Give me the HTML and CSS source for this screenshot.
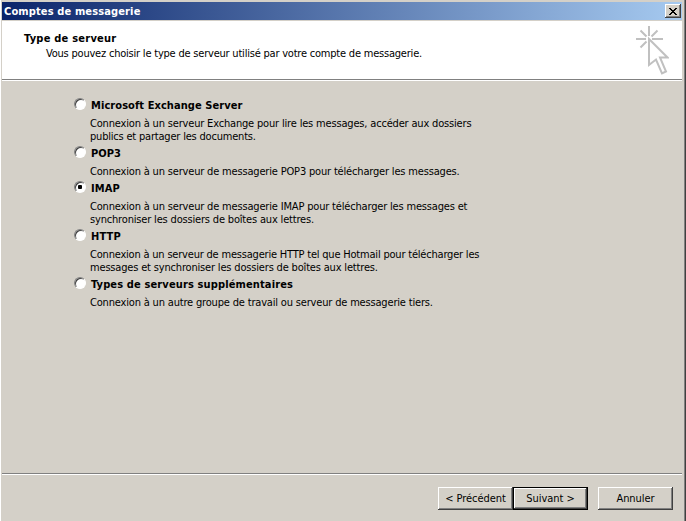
FILE: index.html
```html
<!DOCTYPE html>
<html lang="fr">
<head>
<meta charset="utf-8">
<title>Comptes de messagerie</title>
<link rel="stylesheet" href="styles.css">
</head>
<body>
<div class="window">
  <div class="titlebar">
    <span class="caption">Comptes de messagerie</span>
    <button class="close" aria-label="Fermer"><svg width="8" height="7" viewBox="0 0 8 7" shape-rendering="crispEdges"><path d="M0 0h2v1h1v1h2V1h1V0h2v1H7v1H6v1H5v1h1v1h1v1h1v1H6V6H5V5H3v1H2v1H0V6h1V5h1V4h1V3H2V2H1V1H0z"/></svg></button>
  </div>
  <header class="header">
    <div class="heading">
      <h1>Type de serveur</h1>
      <p class="intro">Vous pouvez choisir le type de serveur utilisé par votre compte de messagerie.</p>
    </div>
    <svg class="cursor" width="33" height="50" viewBox="0 0 33 50" fill="none" stroke="#c0c0c0" stroke-width="2">
      <path d="M13 0v10M0 13h10M16 13h11M4.500 4.500l6 6M21.500 4.500l-6 6M4.500 21.500l6-6"/>
      <path d="M13 13v26l7-5.500 6 14 4-2-6-14h7.500z"/>
    </svg>
  </header>
  <main class="options">
    <section class="option">
      <label><input type="radio" name="type"><span class="wide">Microsoft Exchange Server</span></label>
      <p><span>Connexion à un serveur Exchange pour lire les messages, accéder aux dossiers</span><span class="tight">publics et partager les documents.</span></p>
    </section>
    <section class="option">
      <label><input type="radio" name="type"><span>POP3</span></label>
      <p><span>Connexion à un serveur de messagerie POP3 pour télécharger les messages.</span></p>
    </section>
    <section class="option">
      <label><input type="radio" name="type" checked><span class="wider">IMAP</span></label>
      <p><span>Connexion à un serveur de messagerie IMAP pour télécharger les messages et</span><span>synchroniser les dossiers de boîtes aux lettres.</span></p>
    </section>
    <section class="option">
      <label><input type="radio" name="type"><span class="wider">HTTP</span></label>
      <p><span class="tight">Connexion à un serveur de messagerie HTTP tel que Hotmail pour télécharger les</span><span>messages et synchroniser les dossiers de boîtes aux lettres.</span></p>
    </section>
    <section class="option">
      <label><input type="radio" name="type"><span class="wider">Types de serveurs supplémentaires</span></label>
      <p><span>Connexion à un autre groupe de travail ou serveur de messagerie tiers.</span></p>
    </section>
  </main>
  <footer class="footer">
    <button class="btn">&lt; Précédent</button>
    <button class="btn default">Suivant &gt;</button>
    <button class="btn cancel">Annuler</button>
  </footer>
</div>
</body>
</html>
```
FILE: styles.css
```css
* { box-sizing: border-box; }
body { margin: 0; background: #d4d0c8; color: #000; font: 11px/13px "DejaVu Sans Condensed", "DejaVu Sans", sans-serif; font-stretch: condensed; }
.window { width: 686px; height: 521px; overflow: hidden; display: flex; flex-direction: column; border-left: 1px solid #fff; border-right: 1px solid #404040; padding: 2px 3px 0 1px; box-shadow: inset -1px 0 #808080; }
.titlebar { height: 18px; flex: none; display: flex; align-items: center; justify-content: space-between; padding: 0 1px 0 2px; background: linear-gradient(90deg, #0a246a, #a6caf0); color: #fff; font-weight: bold; letter-spacing: .13px; }
button { font: inherit; color: #000; background: #d4d0c8; padding: 0; border: 0; box-shadow: inset -1px -1px #404040, inset 1px 1px #fff, inset -2px -2px #808080; }
.close { width: 16px; height: 14px; display: flex; align-items: center; justify-content: center; }
.header { height: 59px; flex: none; margin-top: 1px; background: #fff; border-bottom: 1px solid #808080; box-shadow: 0 1px #fff; display: flex; justify-content: space-between; padding: 5px 13px 0 22px; }
.heading { padding-top: 6px; white-space: nowrap; }
.cursor { flex: none; }
h1 { font-size: 11px; line-height: 14px; margin: 0; letter-spacing: .23px; }
p { margin: 0; white-space: nowrap; letter-spacing: -.175px; }
.intro { padding: 1px 0 0 22px; letter-spacing: -.21px; }
.options { flex: 1; padding: 18px 0 0 72px; }
.option label { display: flex; height: 14px; font-weight: bold; gap: 5px; white-space: nowrap; }
.option label span { padding-top: 1px; }
.option p { padding: 5px 0 3px 16px; }
.option p span { display: block; width: max-content; }
.tight { letter-spacing: -.2px; }
.wide { letter-spacing: .07px; }
.wider { letter-spacing: .13px; }
input { appearance: none; width: 12px; height: 12px; margin: 0; flex: none; border-radius: 50%; background: #fff; border: 1px solid; border-color: #808080 #fff #fff #808080; box-shadow: inset 1px 1px #404040; }
input:checked { background: radial-gradient(circle, #000 0 2px, #fff 2.5px); }
.footer { height: 48px; flex: none; display: flex; border-top: 1px solid #808080; box-shadow: inset 0 1px #fff; padding: 13px 9px 0 0; justify-content: flex-end; }
.btn { width: 75px; height: 23px; letter-spacing: -.05px; }
.default { border: 1px solid #000; }
.cancel { margin-left: 10px; }
```
